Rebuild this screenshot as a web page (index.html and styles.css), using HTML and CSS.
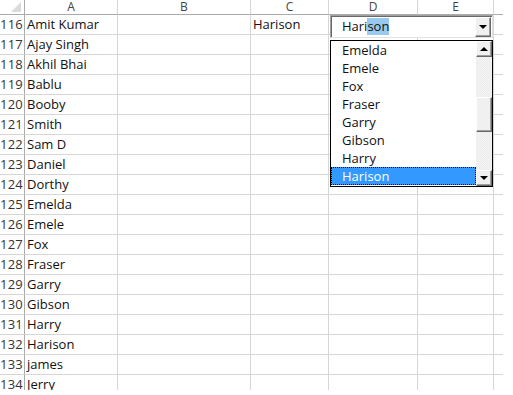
FILE: index.html
```html
<!DOCTYPE html>
<html>
<head>
<meta charset="utf-8">
<link rel="stylesheet" href="styles.css">
</head>
<body>
<div class="sheet">
  <div class="grid">
    <div class="hdr corner"><span class="tri"></span></div>
    <div class="hdr">A</div><div class="hdr">B</div><div class="hdr">C</div><div class="hdr">D</div><div class="hdr">E</div><div class="hdr last"></div>

    <div class="rn">116</div><div class="c">Amit Kumar</div><div class="c"></div><div class="c">Harison</div><div class="c"></div><div class="c"></div><div class="c last"></div>
    <div class="rn">117</div><div class="c">Ajay Singh</div><div class="c"></div><div class="c"></div><div class="c"></div><div class="c"></div><div class="c last"></div>
    <div class="rn">118</div><div class="c">Akhil Bhai</div><div class="c"></div><div class="c"></div><div class="c"></div><div class="c"></div><div class="c last"></div>
    <div class="rn">119</div><div class="c">Bablu</div><div class="c"></div><div class="c"></div><div class="c"></div><div class="c"></div><div class="c last"></div>
    <div class="rn">120</div><div class="c">Booby</div><div class="c"></div><div class="c"></div><div class="c"></div><div class="c"></div><div class="c last"></div>
    <div class="rn">121</div><div class="c">Smith</div><div class="c"></div><div class="c"></div><div class="c"></div><div class="c"></div><div class="c last"></div>
    <div class="rn">122</div><div class="c">Sam D</div><div class="c"></div><div class="c"></div><div class="c"></div><div class="c"></div><div class="c last"></div>
    <div class="rn">123</div><div class="c">Daniel</div><div class="c"></div><div class="c"></div><div class="c"></div><div class="c"></div><div class="c last"></div>
    <div class="rn">124</div><div class="c">Dorthy</div><div class="c"></div><div class="c"></div><div class="c"></div><div class="c"></div><div class="c last"></div>
    <div class="rn">125</div><div class="c">Emelda</div><div class="c"></div><div class="c"></div><div class="c"></div><div class="c"></div><div class="c last"></div>
    <div class="rn">126</div><div class="c">Emele</div><div class="c"></div><div class="c"></div><div class="c"></div><div class="c"></div><div class="c last"></div>
    <div class="rn">127</div><div class="c">Fox</div><div class="c"></div><div class="c"></div><div class="c"></div><div class="c"></div><div class="c last"></div>
    <div class="rn">128</div><div class="c">Fraser</div><div class="c"></div><div class="c"></div><div class="c"></div><div class="c"></div><div class="c last"></div>
    <div class="rn">129</div><div class="c">Garry</div><div class="c"></div><div class="c"></div><div class="c"></div><div class="c"></div><div class="c last"></div>
    <div class="rn">130</div><div class="c">Gibson</div><div class="c"></div><div class="c"></div><div class="c"></div><div class="c"></div><div class="c last"></div>
    <div class="rn">131</div><div class="c">Harry</div><div class="c"></div><div class="c"></div><div class="c"></div><div class="c"></div><div class="c last"></div>
    <div class="rn">132</div><div class="c">Harison</div><div class="c"></div><div class="c"></div><div class="c"></div><div class="c"></div><div class="c last"></div>
    <div class="rn">133</div><div class="c">james</div><div class="c"></div><div class="c"></div><div class="c"></div><div class="c"></div><div class="c last"></div>
    <div class="rn">134</div><div class="c">Jerry</div><div class="c"></div><div class="c"></div><div class="c"></div><div class="c"></div><div class="c last"></div>
  </div>

  <div class="combo">
    <div class="combo-text">Hari<span class="sel">son</span></div>
    <div class="btn"><span class="down"></span></div>
  </div>

  <div class="list">
    <div class="items">
      <div class="item">Emelda</div>
      <div class="item">Emele</div>
      <div class="item">Fox</div>
      <div class="item">Fraser</div>
      <div class="item">Garry</div>
      <div class="item">Gibson</div>
      <div class="item">Harry</div>
      <div class="item active">Harison</div>
    </div>
    <div class="scroll">
      <div class="sbtn"><span class="up"></span></div>
      <div class="track">
        <div class="thumb"></div>
      </div>
      <div class="sbtn"><span class="down"></span></div>
    </div>
  </div>
</div>
</body>
</html>
```

FILE: styles.css
```css
html, body {
  margin: 0;
  padding: 0;
  background: #ffffff;
}
.sheet {
  position: relative;
  width: 513px;
  height: 390px;
  overflow: hidden;
  font-family: "Open Sans", "DejaVu Sans", sans-serif;
  font-size: 13px;
  color: #111;
}
.grid {
  display: grid;
  grid-template-columns: 25px 93px 133px 78px 89px 76px 9px;
  grid-template-rows: 15px repeat(19, 20px);
}
.hdr {
  border-right: 1px solid #d6d6d6;
  border-bottom: 1px solid #ababab;
  color: #444;
  text-align: center;
  line-height: 14px;
  font-size: 12px;
}
.hdr.corner {
  position: relative;
  border-right: 1px solid #ababab;
}
.tri {
  position: absolute;
  right: 3px;
  bottom: 2px;
  width: 0;
  height: 0;
  border-left: 10px solid transparent;
  border-bottom: 10px solid #dadada;
}
.hdr.last, .c.last {
  border-right: none;
}
.rn {
  border-right: 1px solid #ababab;
  border-bottom: 1px solid #d6d6d6;
  text-align: right;
  padding-right: 1px;
  color: #333;
  font-size: 13px;
  letter-spacing: 0.2px;
  line-height: 19px;
}
.c {
  border-right: 1px solid #d6d6d6;
  border-bottom: 1px solid #d6d6d6;
  padding-left: 2px;
  line-height: 19px;
  white-space: nowrap;
  overflow: hidden;
}

.combo {
  position: absolute;
  left: 330px;
  top: 15px;
  width: 163px;
  height: 23px;
  box-sizing: border-box;
  background: #fff;
  border-top: 1px solid #a0a0a0;
  border-left: 1px solid #a0a0a0;
  border-right: 1px solid #e3e3e3;
  border-bottom: 1px solid #e3e3e3;
  box-shadow: inset 1px 1px 0 #696969;
  display: flex;
  align-items: center;
}
.combo-text {
  flex: 1;
  padding-left: 11px;
  line-height: 17px;
}
.sel {
  background: #99c9ef;
  display: inline-block;
  line-height: 17px;
}
.btn {
  width: 16px;
  height: 20px;
  box-sizing: border-box;
  margin-right: 1px;
  margin-top: 1px;
  background: #f0f0f0;
  border-top: 1px solid #fff;
  border-left: 1px solid #fff;
  border-right: 1px solid #696969;
  border-bottom: 1px solid #696969;
  box-shadow: inset -1px -1px 0 #a0a0a0;
  display: flex;
  align-items: center;
  justify-content: center;
}
.down {
  width: 0;
  height: 0;
  border-left: 4px solid transparent;
  border-right: 4px solid transparent;
  border-top: 4px solid #000;
}
.up {
  width: 0;
  height: 0;
  border-left: 4px solid transparent;
  border-right: 4px solid transparent;
  border-bottom: 4px solid #000;
}

.list {
  position: absolute;
  left: 330px;
  top: 40px;
  width: 163px;
  height: 147px;
  box-sizing: border-box;
  background: #fff;
  border: 1px solid #000;
  display: flex;
}
.items {
  flex: 1;
  display: flex;
  flex-direction: column;
}
.item {
  height: 18px;
  line-height: 18px;
  padding-left: 11px;
  box-sizing: border-box;
}
.item.active {
  background: #3399ff;
  color: #fff;
  outline: 1px dotted #000;
  outline-offset: -1px;
}
.scroll {
  width: 16px;
  display: flex;
  flex-direction: column;
  background-color: #f4f4f4;
  background-image: linear-gradient(45deg, #ececec 25%, transparent 25%, transparent 75%, #ececec 75%), linear-gradient(45deg, #ececec 25%, transparent 25%, transparent 75%, #ececec 75%);
  background-size: 2px 2px;
  background-position: 0 0, 1px 1px;
}
.sbtn {
  height: 16px;
  box-sizing: border-box;
  background: #f0f0f0;
  border-top: 1px solid #fff;
  border-left: 1px solid #fff;
  border-right: 1px solid #696969;
  border-bottom: 1px solid #696969;
  box-shadow: inset -1px -1px 0 #a0a0a0;
  display: flex;
  align-items: center;
  justify-content: center;
}
.track {
  flex: 1;
  padding-top: 40px;
}
.thumb {
  height: 35px;
  box-sizing: border-box;
  background: #f0f0f0;
  border-top: 1px solid #fff;
  border-left: 1px solid #fff;
  border-right: 1px solid #696969;
  border-bottom: 1px solid #696969;
  box-shadow: inset -1px -1px 0 #a0a0a0;
}
```
